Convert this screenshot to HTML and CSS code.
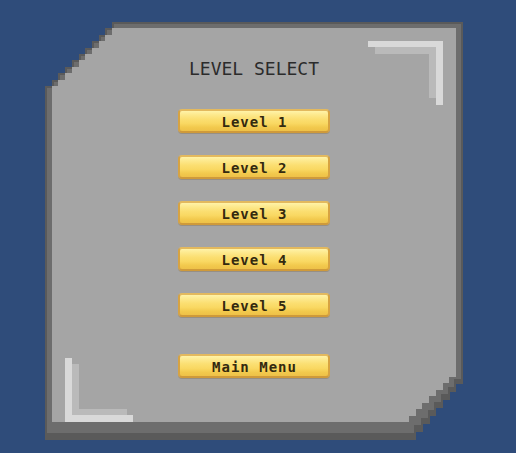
FILE: index.html
```html
<!DOCTYPE html>
<html lang="en">
<head>
<meta charset="utf-8">
<title>Level Select</title>
<link rel="stylesheet" href="styles.css">
</head>
<body>
  <div class="panel">
    <!-- pixel-art frame: dark outline, mid-grey rim, light face, corner brackets -->
    <svg class="panel-frame" width="418" height="418" viewBox="0 0 418 418" shape-rendering="crispEdges" aria-hidden="true">
      <path class="frame-outline" d="M0,418 L0,64 L6.7,64 L6.7,57.6 L13.4,57.6 L13.4,51.2 L20.1,51.2 L20.1,44.8 L26.8,44.8 L26.8,38.4 L33.5,38.4 L33.5,32 L40.2,32 L40.2,25.6 L46.9,25.6 L46.9,19.2 L53.6,19.2 L53.6,12.8 L60.3,12.8 L60.3,6.4 L67,6.4 L67,0 L418,0 L418,362 L411.3,362 L411.3,370 L404.6,370 L404.6,378 L397.9,378 L397.9,386 L391.2,386 L391.2,394 L384.5,394 L384.5,402 L377.8,402 L377.8,410 L371.1,410 L371.1,418 Z"/>
      <path class="frame-rim" d="M2,411 L2,66 L8.7,66 L8.7,59.6 L15.4,59.6 L15.4,53.2 L22.1,53.2 L22.1,46.8 L28.8,46.8 L28.8,40.4 L35.5,40.4 L35.5,34 L42.2,34 L42.2,27.6 L48.9,27.6 L48.9,21.2 L55.6,21.2 L55.6,14.8 L62.3,14.8 L62.3,8.4 L69,8.4 L69,2 L416,2 L416,357 L409.3,357 L409.3,364.7 L402.6,364.7 L402.6,372.4 L395.9,372.4 L395.9,380.1 L389.2,380.1 L389.2,387.9 L382.5,387.9 L382.5,395.6 L375.8,395.6 L375.8,403.3 L369.1,403.3 L369.1,411 Z"/>
      <path class="frame-face" d="M6.7,400 L6.7,64 L13.4,64 L13.4,57.6 L20.1,57.6 L20.1,51.2 L26.8,51.2 L26.8,44.8 L33.5,44.8 L33.5,38.4 L40.2,38.4 L40.2,32 L46.9,32 L46.9,25.6 L53.6,25.6 L53.6,19.2 L60.3,19.2 L60.3,12.8 L67,12.8 L67,6.4 L411,6.4 L411,355 L404.3,355 L404.3,361.4 L397.6,361.4 L397.6,367.9 L390.9,367.9 L390.9,374.3 L384.2,374.3 L384.2,380.7 L377.4,380.7 L377.4,387.1 L370.7,387.1 L370.7,393.6 L364,393.6 L364,400 Z"/>
      <!-- top-right bracket -->
      <rect class="bracket-soft" x="330" y="25" width="61" height="7"/>
      <rect class="bracket-soft" x="384" y="25" width="7" height="51"/>
      <rect class="bracket-hi" x="323" y="19" width="75" height="6"/>
      <rect class="bracket-hi" x="391" y="19" width="7" height="64"/>
      <!-- bottom-left bracket -->
      <rect class="bracket-soft" x="27" y="342" width="7" height="45"/>
      <rect class="bracket-soft" x="27" y="387" width="55" height="6"/>
      <rect class="bracket-hi" x="20" y="336" width="7" height="64"/>
      <rect class="bracket-hi" x="20" y="393" width="68" height="7"/>
    </svg>

    <div class="panel-body">
      <h1 class="title">LEVEL SELECT</h1>
      <div class="level-list">
        <button class="btn" type="button">Level 1</button>
        <button class="btn" type="button">Level 2</button>
        <button class="btn" type="button">Level 3</button>
        <button class="btn" type="button">Level 4</button>
        <button class="btn" type="button">Level 5</button>
      </div>
      <button class="btn btn-menu" type="button">Main Menu</button>
    </div>
  </div>
</body>
</html>
```

FILE: styles.css
```css
html,
body {
  margin: 0;
  height: 100%;
}

body {
  background: #2f4c7a;
  overflow: hidden;
}

.panel {
  position: relative;
  width: 418px;
  height: 418px;
  margin: 22px 0 0 45px;
}

.panel-frame {
  position: absolute;
  top: 0;
  left: 0;
  display: block;
}

.frame-outline { fill: #5a5a5a; }
.frame-rim { fill: #6d6d6d; }
.frame-face { fill: #a5a5a5; }
.bracket-hi { fill: #d9d9d9; }
.bracket-soft { fill: #bababa; }

.panel-body {
  position: relative;
  display: flex;
  flex-direction: column;
  align-items: center;
  padding-top: 37px;
}

.title {
  margin: 0;
  font: 400 18px/20px "DejaVu Sans Mono", monospace;
  color: #2b2b2b;
}

.level-list {
  display: flex;
  flex-direction: column;
  gap: 22px;
  margin-top: 30px;
}

.btn {
  box-sizing: border-box;
  display: block;
  width: 152px;
  height: 24px;
  margin: 0;
  padding: 1px 0 0 1px;
  border: 2px solid #d7a342;
  border-top-color: #e3b95e;
  border-bottom-color: #cf9a3a;
  border-radius: 4px;
  background: linear-gradient(to bottom,
    #fff3a8 0,
    #fde98e 18%,
    #fbdf72 40%,
    #f9d862 62%,
    #f2c94d 82%,
    #eec148 100%);
  box-shadow: 0 1px 0 rgba(110, 80, 30, 0.25);
  font: 700 14px/21px "DejaVu Sans Mono", monospace;
  letter-spacing: 1px;
  color: #33290f;
  text-align: center;
  cursor: pointer;
}

.btn-menu {
  margin-top: 37px;
}
```
